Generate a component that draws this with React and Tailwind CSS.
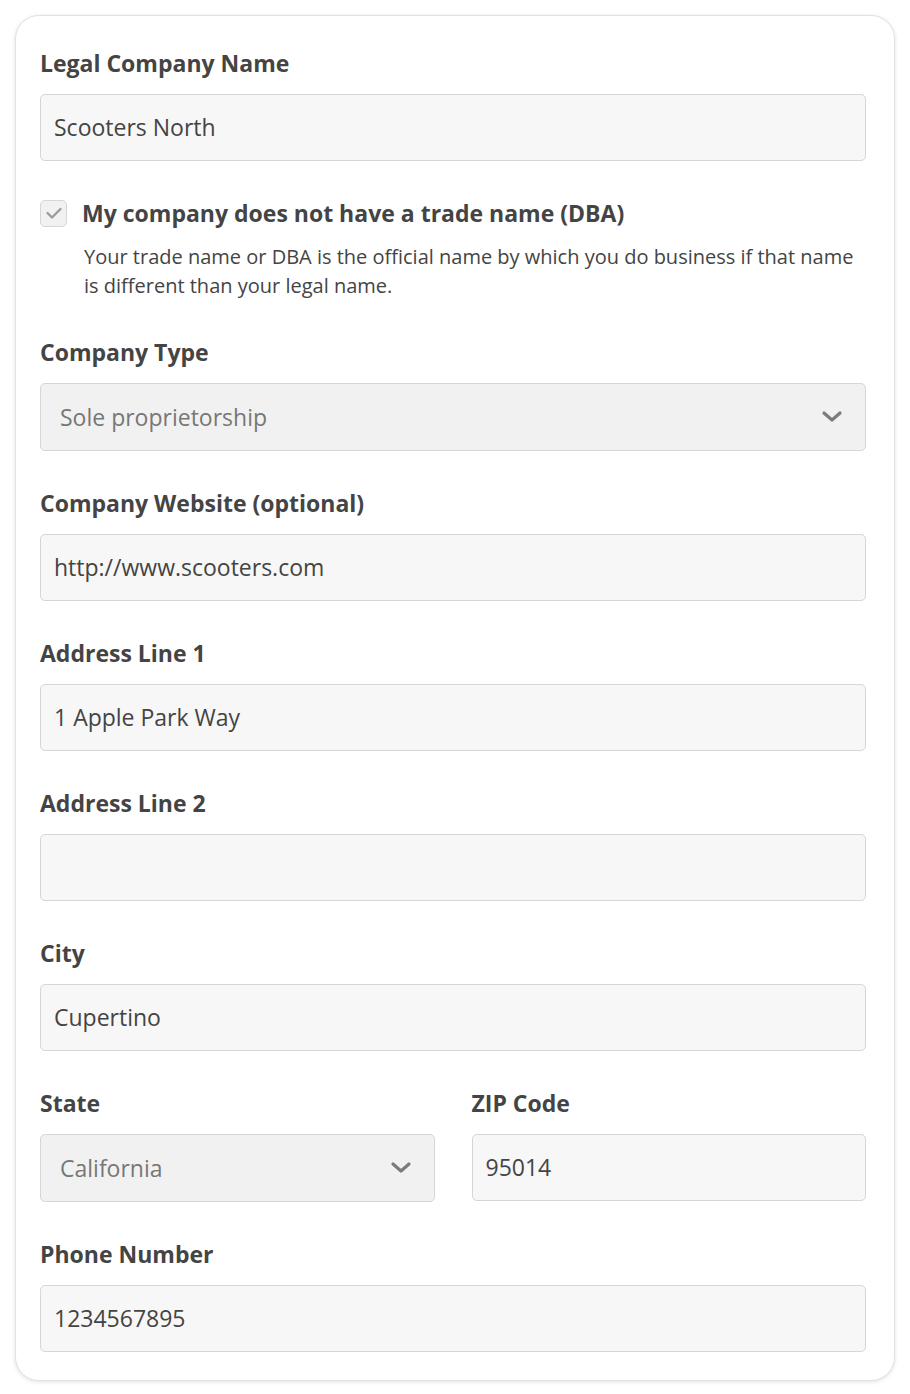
import React from 'react'

const FONT = { fontFamily: '"Open Sans", Lato, sans-serif' }

function Label({ children }) {
  return <div className="text-[23px] leading-[26px] font-bold text-[#444] mb-[18px]">{children}</div>
}

function TextInput({ value }) {
  return (
    <div className="h-[67px] flex items-center px-[13px] rounded-[5px] border border-[#d6d6d6] bg-[#f7f7f7] text-[23px] text-[#444]">
      {value}
    </div>
  )
}

function Select({ value }) {
  return (
    <div className="h-[68px] flex items-center justify-between pl-[19px] pr-[22px] rounded-[5px] border border-[#d6d6d6] bg-[#f1f1f1] text-[23px] text-[#777]">
      <span>{value}</span>
      <svg width="22" height="14" viewBox="0 0 22 14" fill="none">
        <path d="M3 3l8 7 8-7" stroke="#7b7b7b" strokeWidth="3.2" strokeLinecap="round" strokeLinejoin="round" />
      </svg>
    </div>
  )
}

function Field({ label, children }) {
  return (
    <div>
      <Label>{label}</Label>
      {children}
    </div>
  )
}

export default function App() {
  return (
    <div className="bg-white min-h-screen p-[15px]" style={FONT}>
      <div className="rounded-[24px] border border-[#e2e2e2] shadow-[0_1px_4px_rgba(0,0,0,0.12)] bg-white pt-[34px] pb-[28px] pl-[24px] pr-[28px] flex flex-col gap-[39px]">
        <Field label="Legal Company Name">
          <TextInput value="Scooters North" />
        </Field>

        <div>
          <div className="flex items-center gap-[15px] h-[26px]">
            <div className="w-[27px] h-[27px] shrink-0 rounded-[5px] border border-[#d6d6d6] bg-[#f1f1f1] flex items-center justify-center">
              <svg width="18" height="14" viewBox="0 0 18 14" fill="none">
                <path d="M2.5 7l4.5 4.5 8.5-8.5" stroke="#9c9c9c" strokeWidth="2.4" strokeLinecap="round" strokeLinejoin="round" />
              </svg>
            </div>
            <span className="text-[23px] leading-[26px] font-bold text-[#444]">My company does not have a trade name (DBA)</span>
          </div>
          <p className="mt-[16px] pl-[44px] text-[20px] leading-[29px] text-[#444]">
            Your trade name or DBA is the official name by which you do business if that name is different than your legal name.
          </p>
        </div>

        <Field label="Company Type">
          <Select value="Sole proprietorship" />
        </Field>

        <Field label="Company Website (optional)">
          <TextInput value="http://www.scooters.com" />
        </Field>

        <Field label="Address Line 1">
          <TextInput value="1 Apple Park Way" />
        </Field>

        <Field label="Address Line 2">
          <TextInput value="" />
        </Field>

        <Field label="City">
          <TextInput value="Cupertino" />
        </Field>

        <div className="grid grid-cols-2 gap-[37px]">
          <Field label="State">
            <Select value="California" />
          </Field>
          <Field label="ZIP Code">
            <TextInput value="95014" />
          </Field>
        </div>

        <Field label="Phone Number">
          <TextInput value="1234567895" />
        </Field>
      </div>
    </div>
  )
}
